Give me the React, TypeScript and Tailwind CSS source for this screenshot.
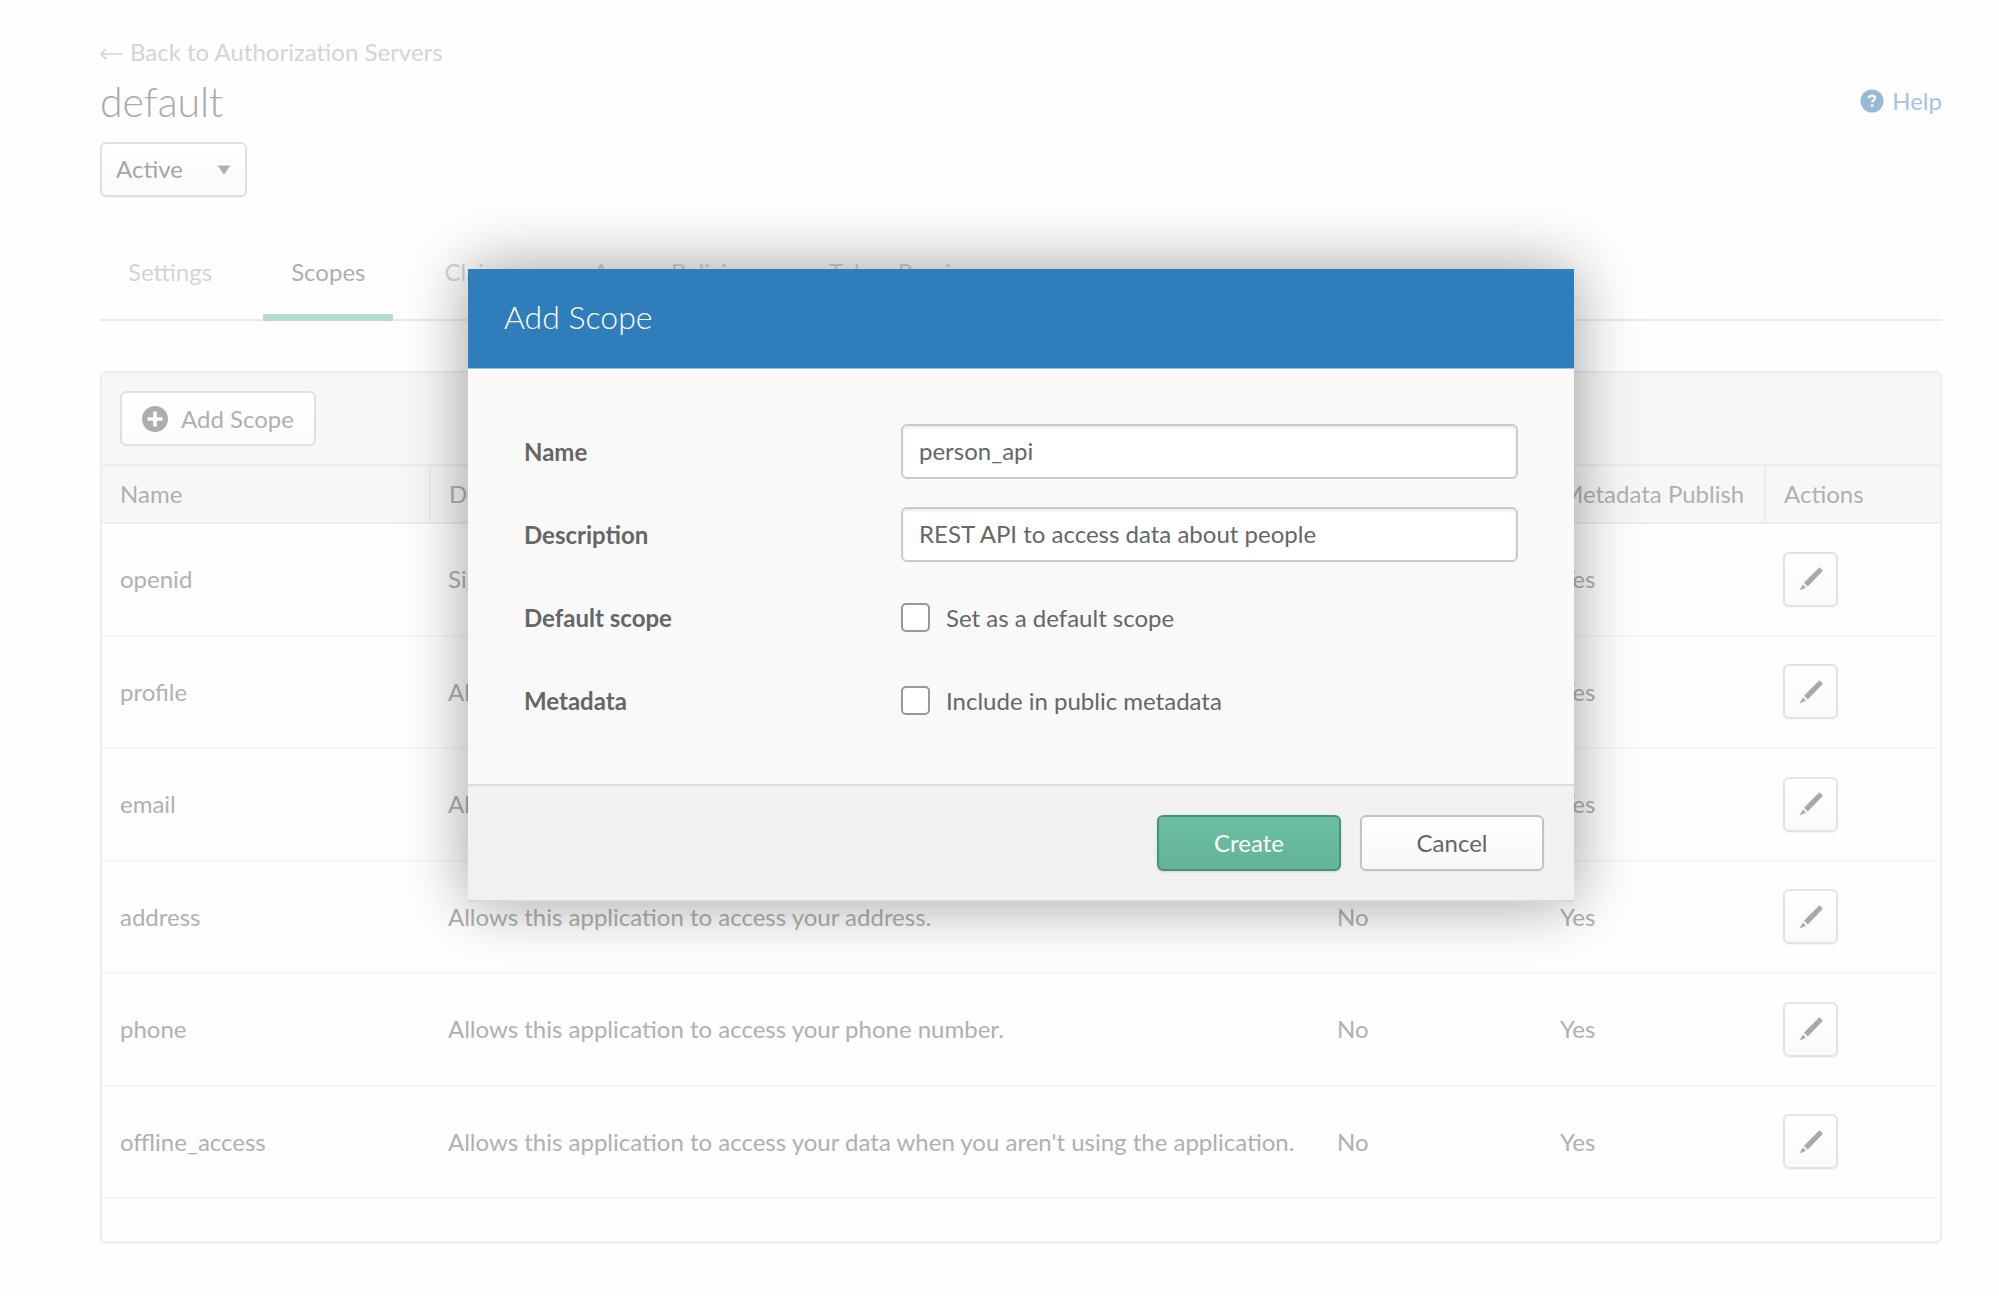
import React, { useState } from 'react';
import clsx from 'clsx';

type Scope = {
  name: string;
  description: string;
  isDefault: boolean;
  published: boolean;
};

const TABS = ['Settings', 'Scopes', 'Claims', 'Access Policies', 'Token Preview'];

const SCOPES: Scope[] = [
  { name: 'openid', description: 'Signals an OpenID request.', isDefault: false, published: true },
  { name: 'profile', description: 'Allows this application to access your profile.', isDefault: false, published: true },
  { name: 'email', description: 'Allows this application to access your email.', isDefault: false, published: true },
  { name: 'address', description: 'Allows this application to access your address.', isDefault: false, published: true },
  { name: 'phone', description: 'Allows this application to access your phone number.', isDefault: false, published: true },
  {
    name: 'offline_access',
    description: "Allows this application to access your data when you aren't using the application.",
    isDefault: false,
    published: true,
  },
];

const PencilIcon = () => (
  <svg viewBox="0 0 24 24" className="size-6" fill="#a9a9a9" aria-hidden="true">
    <path d="M20.4 0.2L24 3.8 8.8 19.6 5 15.8z" />
    <path d="M3.9 17.4L7 20.8 0.6 23.6z" />
  </svg>
);

const PlusIcon = () => (
  <svg viewBox="0 0 26 26" className="size-[26px]" aria-hidden="true">
    <circle cx="13" cy="13" r="13" fill="#adadad" />
    <path d="M13 5.5v15M5.5 13h15" stroke="#fff" strokeWidth="3.6" />
  </svg>
);

const HelpIcon = () => (
  <svg viewBox="0 0 24 24" className="size-6" aria-hidden="true">
    <circle cx="12" cy="12" r="11.5" fill="#97b9d8" />
    <path d="M8.9 9.2C9 7.4 10.3 6.7 12 6.7c1.8 0 3.1.9 3.1 2.4 0 2.1-2.9 2-2.9 4.3" fill="none" stroke="#fff" strokeWidth="2.3" />
    <rect x="10.9" y="15.2" width="2.5" height="2.5" fill="#fff" />
  </svg>
);

function ScopesTable() {
  return (
    <table className="w-full h-[733px] table-fixed border-collapse text-left text-[#b0b0b0]">
      <colgroup>
        <col className="w-[328px]" />
        <col />
        <col className="w-[223px]" />
        <col className="w-[223px]" />
        <col className="w-[175px]" />
      </colgroup>
      <thead>
        <tr className="h-[57px] bg-[#f7f7f7]">
          {['Name', 'Description', 'Default Scope', 'Metadata Publish', 'Actions'].map(title => (
            <th key={title} className="border-b-2 border-r-2 border-[#ededed] px-[18px] font-normal whitespace-nowrap last:border-r-0">
              {title}
            </th>
          ))}
        </tr>
      </thead>
      <tbody>
        {SCOPES.map(scope => (
          <tr key={scope.name} className="border-b-2 border-[#f7f7f7]">
            <td className="px-[18px]">{scope.name}</td>
            <td className="px-[18px] whitespace-nowrap">{scope.description}</td>
            <td className="px-[18px]">{scope.isDefault ? 'Yes' : 'No'}</td>
            <td className="px-[18px]">{scope.published ? 'Yes' : 'No'}</td>
            <td className="px-[18px]">
              <button
                type="button"
                aria-label={`Edit ${scope.name}`}
                className="flex size-[55px] items-center justify-center rounded-md border-2 border-[#e3e3e3] bg-linear-to-b from-white to-[#fafafa] shadow-xs"
              >
                <PencilIcon />
              </button>
            </td>
          </tr>
        ))}
      </tbody>
    </table>
  );
}

function AddScopeDialog() {
  const [name, setName] = useState('person_api');
  const [description, setDescription] = useState('REST API to access data about people');
  const [isDefault, setIsDefault] = useState(false);
  const [isPublic, setIsPublic] = useState(false);

  const inputClass =
    'h-[55px] w-full rounded-md border-2 border-[#cacaca] bg-white px-4 pb-0.5 text-[#666] shadow-[inset_0_2px_3px_rgba(0,0,0,0.08)] outline-none';
  const checkboxClass =
    'size-[29px] appearance-none rounded-[5px] border-2 border-[#999] bg-white checked:bg-[#2f7dbb]';
  const rowClass = 'grid h-[55px] grid-cols-[377px_1fr] items-center';

  return (
    <div className="fixed inset-0 flex items-start justify-center pt-[269px] pr-[57px] pl-[100px]">
      <form
        role="dialog"
        aria-labelledby="dialog-title"
        className="w-full max-w-[1106px] border-b-2 border-[#d8d8d8] text-[#666] shadow-[0_0_60px_rgba(0,0,0,0.38)]"
        onSubmit={e => e.preventDefault()}
      >
        <h2 id="dialog-title" className="flex h-[100px] items-center border-b border-[#97bedd] bg-[#2f7dbb] px-9 pb-1 text-[32px] font-light text-white">
          Add Scope
        </h2>

        <div className="flex flex-col gap-7 bg-[#f9f9f9] px-14 pt-[55px] pb-14">
          <div className={rowClass}>
            <label htmlFor="scope-name" className="font-bold">Name</label>
            <input id="scope-name" type="text" className={inputClass} value={name} onChange={e => setName(e.target.value)} />
          </div>
          <div className={rowClass}>
            <label htmlFor="scope-description" className="font-bold">Description</label>
            <input
              id="scope-description"
              type="text"
              className={inputClass}
              value={description}
              onChange={e => setDescription(e.target.value)}
            />
          </div>
          <div className={rowClass}>
            <span className="font-bold">Default scope</span>
            <label className="flex items-center gap-4">
              <input type="checkbox" className={checkboxClass} checked={isDefault} onChange={e => setIsDefault(e.target.checked)} />
              Set as a default scope
            </label>
          </div>
          <div className={rowClass}>
            <span className="font-bold">Metadata</span>
            <label className="flex items-center gap-4">
              <input type="checkbox" className={checkboxClass} checked={isPublic} onChange={e => setIsPublic(e.target.checked)} />
              Include in public metadata
            </label>
          </div>
        </div>

        <div className="flex justify-end gap-[19px] border-t-2 border-[#dcdcdc] bg-[#f1f1f1] px-[30px] py-[29px]">
          <button
            type="submit"
            className="h-14 w-[184px] rounded-md border-2 border-[#479277] bg-linear-to-b from-[#6bbea0] to-[#64b598] text-white shadow-sm"
          >
            Create
          </button>
          <button
            type="button"
            className="h-14 w-[184px] rounded-md border-2 border-[#c3c3c3] bg-linear-to-b from-white to-[#f8f8f8] shadow-xs"
          >
            Cancel
          </button>
        </div>
      </form>
    </div>
  );
}

export default function App() {
  const [activeTab, setActiveTab] = useState('Scopes');

  return (
    <div className="min-h-screen bg-[#fefefe] pt-9 pr-[57px] pb-14 pl-[100px] font-['Lato',sans-serif] text-[24px] leading-8">
      <a href="#" className="flex w-fit items-center gap-[7px] text-[#d4d4d4]">
        <svg viewBox="0 0 23 14" className="mt-1 h-3.5 w-[23px]" fill="none" stroke="#d4d4d4" strokeWidth="1.6" aria-hidden="true">
          <path d="M22.5 7H1M6 2L1 7l5 5" />
        </svg>
        Back to Authorization Servers
      </a>

      <div className="flex items-center justify-between">
        <h1 className="py-2 text-[41px] leading-[52px] font-light text-[#a9a9a9]">default</h1>
        <a href="#" className="flex items-center gap-2 pb-0.5 text-[#a3c3df]">
          <HelpIcon />
          Help
        </a>
      </div>

      <div className="relative mt-1.5 w-[147px]">
        <select
          aria-label="Status"
          className="h-[55px] w-full appearance-none rounded-md border-2 border-[#e0e0e0] bg-linear-to-b from-white to-[#fafafa] pb-0.5 pl-3.5 text-[#a6a6a6] shadow-xs"
        >
          <option>Active</option>
          <option>Inactive</option>
        </select>
        <svg viewBox="0 0 14 10" className="pointer-events-none absolute top-[23px] right-4 h-2.5 w-3.5" fill="#b0b0b0" aria-hidden="true">
          <path d="M0.5 0.5h13L7 9.5z" />
        </svg>
      </div>

      <nav className="mt-11 flex gap-[23px] border-b-2 border-[#ebebeb]">
        {TABS.map(tab => (
          <button
            key={tab}
            type="button"
            onClick={() => setActiveTab(tab)}
            className={clsx(
              '-mb-0.5 h-20 border-b-[7px] px-7 pb-3',
              tab === activeTab ? 'border-[#b5dccd] text-[#aeaeae]' : 'border-transparent text-[#d4d4d4]'
            )}
          >
            {tab}
          </button>
        ))}
      </nav>

      <section className="mt-[50px] rounded-md border-2 border-[#ededed] bg-[#fefefe] pb-[42px] shadow-[0_2px_3px_rgba(0,0,0,0.03)]">
        <div className="border-b-2 border-[#ededed] bg-[#f7f7f7] px-[18px] py-[18px]">
          <button
            type="button"
            className="flex h-[55px] items-center gap-[13px] rounded-md border-2 border-[#e0e0e0] bg-linear-to-b from-white to-[#fcfcfc] px-5 text-[#b0b0b0]"
          >
            <PlusIcon />
            Add Scope
          </button>
        </div>
        <ScopesTable />
      </section>

      <AddScopeDialog />
    </div>
  );
}
